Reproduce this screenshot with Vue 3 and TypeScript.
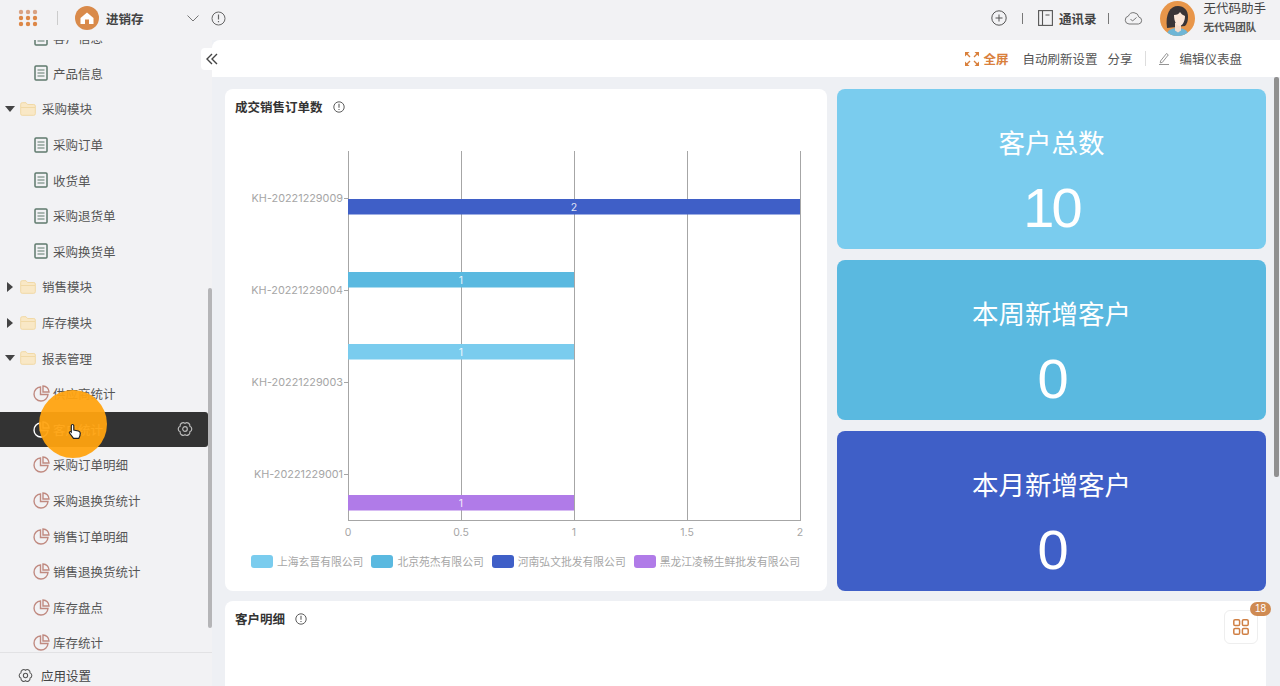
<script setup lang="ts">
interface SideRow {
  label: string
  kind: 'doc' | 'folder' | 'pie'
  open?: boolean
  active?: boolean
}

const sideRows: SideRow[] = [
  { label: '客户信息', kind: 'doc' },
  { label: '产品信息', kind: 'doc' },
  { label: '采购模块', kind: 'folder', open: true },
  { label: '采购订单', kind: 'doc' },
  { label: '收货单', kind: 'doc' },
  { label: '采购退货单', kind: 'doc' },
  { label: '采购换货单', kind: 'doc' },
  { label: '销售模块', kind: 'folder' },
  { label: '库存模块', kind: 'folder' },
  { label: '报表管理', kind: 'folder', open: true },
  { label: '供应商统计', kind: 'pie' },
  { label: '客户统计', kind: 'pie', active: true },
  { label: '采购订单明细', kind: 'pie' },
  { label: '采购退换货统计', kind: 'pie' },
  { label: '销售订单明细', kind: 'pie' },
  { label: '销售退换货统计', kind: 'pie' },
  { label: '库存盘点', kind: 'pie' },
  { label: '库存统计', kind: 'pie' },
]

const tiles = [
  { title: '客户总数', value: 10, color: '#7accee' },
  { title: '本周新增客户', value: 0, color: '#5ab9e0' },
  { title: '本月新增客户', value: 0, color: '#3f5fc7' },
]

const gridX = [348, 461, 574, 687, 800]
const gridLabels = ['0', '0.5', '1', '1.5', '2']

const bars = [
  { y: 199, w: 452, color: '#3f5fc7', value: 2 },
  { y: 272, w: 226, color: '#5ab9e0', value: 1 },
  { y: 344, w: 226, color: '#7accee', value: 1 },
  { y: 495, w: 226, color: '#b07be8', value: 1 },
]

const yLabels = [
  { y: 198, text: 'KH-20221229009' },
  { y: 290, text: 'KH-20221229004' },
  { y: 382, text: 'KH-20221229003' },
  { y: 474, text: 'KH-20221229001' },
]

const legend = [
  { name: '上海玄晋有限公司', color: '#7accee' },
  { name: '北京苑杰有限公司', color: '#5ab9e0' },
  { name: '河南弘文批发有限公司', color: '#3f5fc7' },
  { name: '黑龙江凌畅生鲜批发有限公司', color: '#b07be8' },
]

const gearPath = 'M8 2.400A3 3 0 0 1 12.850 5.200A3 3 0 0 1 12.850 10.800A3 3 0 0 1 8 13.600A3 3 0 0 1 3.150 10.800A3 3 0 0 1 3.150 5.200A3 3 0 0 1 8 2.400Z'
</script>

<template>
  <div class="app">
    <header class="topbar">
      <div class="top-left">
        <svg class="apps" width="20" height="18" viewBox="0 0 20 18">
          <g v-for="row in 3" :key="row">
            <circle v-for="col in 3" :key="col" :cx="3 + (col - 1) * 7" :cy="3 + (row - 1) * 6" r="2.200" :fill="row === 1 ? '#d9a283' : '#dd8746'" />
          </g>
        </svg>
        <span class="top-sep"></span>
        <span class="app-logo">
          <svg width="16" height="16" viewBox="0 0 16 16">
            <path d="M1.500 8 8 2.500 14.500 8V14H1.500Z" fill="#fff" />
            <rect x="6" y="9.500" width="4" height="4.500" fill="#d98a4a" />
          </svg>
        </span>
        <span class="app-name">进销存</span>
        <svg class="chev" width="12" height="7" viewBox="0 0 12 7">
          <path d="M.5.500l5.500 5.500 5.500-5.500" fill="none" stroke="#777" stroke-width="1" />
        </svg>
        <svg width="15" height="15" viewBox="0 0 15 15">
          <circle cx="7.500" cy="7.500" r="6.500" fill="none" stroke="#666" stroke-width="1" />
          <path d="M7.500 3.500v5M7.500 10v1.200" stroke="#666" stroke-width="1.200" />
        </svg>
      </div>
      <div class="top-right">
        <svg width="16" height="16" viewBox="0 0 16 16">
          <circle cx="8" cy="8" r="7.200" fill="none" stroke="#555" stroke-width="1" />
          <path d="M8 4.500v7M4.500 8h7" stroke="#555" stroke-width="1" />
        </svg>
        <span class="bar"></span>
        <svg width="15" height="16" viewBox="0 0 15 16">
          <rect x="0.600" y="0.600" width="13.800" height="14.800" fill="none" stroke="#555" stroke-width="1.100" />
          <path d="M4.500 1v14M7.500 5h4" stroke="#555" stroke-width="1.100" fill="none" />
        </svg>
        <span class="contacts">通讯录</span>
        <span class="bar bar-short"></span>
        <svg width="19" height="14" viewBox="0 0 19 14">
          <path d="M5 13a4 4 0 0 1-.6-7.900 5.500 5.500 0 0 1 10.500 1A3.500 3.500 0 0 1 14.500 13Z" fill="none" stroke="#777" stroke-width="1" />
          <path d="M6.500 8l2 2 4-3.500" fill="none" stroke="#777" stroke-width="1" />
        </svg>
        <svg class="avatar" width="35" height="35" viewBox="0 0 35 35">
          <clipPath id="avatar-clip"><circle cx="17.500" cy="17.500" r="17.500" /></clipPath>
          <g clip-path="url(#avatar-clip)">
            <rect width="35" height="35" fill="#e8964a" />
            <path d="M7 27C5 13 10 5 18 5c6 0 10 4 10 11 0 4-1 7-3 9Z" fill="#3a3436" />
            <path d="M6 35c1-6 6-8 11.500-8S28 29 29 35Z" fill="#6fb6d6" />
            <path d="M15 22h6v7.500l-3 2-3-2Z" fill="#f6dccb" />
            <path d="M14 14c3 0 5-1 6-3 1 2 3 3 5 4 0 6-3 10-5.500 10S14 21 14 14Z" fill="#fbe6d8" />
          </g>
        </svg>
        <div class="user">
          <span class="user-name">无代码助手</span>
          <span class="user-team">无代码团队</span>
        </div>
      </div>
    </header>

    <div class="body">
      <aside class="sidebar">
        <div class="side-scroll">
          <ul class="side-list">
            <li v-for="row in sideRows" :key="row.label" class="side-row" :class="{ active: row.active, group: row.kind === 'folder' }">
              <template v-if="row.kind === 'folder'">
                <svg class="caret" width="10" height="10" viewBox="0 0 10 10">
                  <path v-if="row.open" d="M0 2h10L5 8Z" fill="#444" />
                  <path v-else d="M2 0l6 5-6 5Z" fill="#444" />
                </svg>
                <svg width="16" height="14" viewBox="0 0 16 14">
                  <path d="M.7 2.200A1.500 1.500 0 0 1 2.200.7H6l1.500 1.800h6.300a1.500 1.500 0 0 1 1.500 1.500v7.800a1.500 1.500 0 0 1-1.500 1.500H2.200a1.500 1.500 0 0 1-1.500-1.500Z" fill="#f9e8c6" stroke="#f1d9a6" stroke-width="1" />
                  <path d="M1 5.500h14" stroke="#f1d9a6" stroke-width="1" />
                </svg>
              </template>
              <svg v-else-if="row.kind === 'doc'" class="leaf-icon" width="14" height="16" viewBox="0 0 14 16">
                <rect x="1" y="1" width="12" height="14" rx="1" fill="none" stroke="#5f7a6c" stroke-width="1.500" />
                <path d="M3.500 5h7M3.500 8h7M3.500 11h7" stroke="#5f7a6c" stroke-width="1.200" />
              </svg>
              <svg v-else class="leaf-icon pie" width="17" height="17" viewBox="0 0 17 17">
                <path d="M7.500 2a7 7 0 1 0 7.500 7.500H7.500Z" fill="none" :stroke="row.active ? '#fff' : '#c08a80'" stroke-width="1.400" />
                <path d="M10 1a6 6 0 0 1 6 6h-6Z" fill="none" :stroke="row.active ? '#fff' : '#c08a80'" stroke-width="1.400" />
              </svg>
              <span class="side-label">{{ row.label }}</span>
              <svg v-if="row.active" class="gear" width="16" height="16" viewBox="0 0 16 16">
                <path :d="gearPath" fill="none" stroke="#bbb" stroke-width="1.200" />
                <circle cx="8" cy="8" r="2.300" fill="none" stroke="#bbb" stroke-width="1.200" />
              </svg>
            </li>
          </ul>
          <div class="side-thumb"></div>
        </div>
        <div class="side-foot">
          <svg width="15" height="15" viewBox="0 0 16 16">
            <path :d="gearPath" fill="none" stroke="#555" stroke-width="1.100" />
            <circle cx="8" cy="8" r="2.300" fill="none" stroke="#555" stroke-width="1.100" />
          </svg>
          <span>应用设置</span>
        </div>
        <div class="click-dot">
          <svg width="14" height="17" viewBox="0 0 14 17">
            <path d="M4.500 1.500c.8 0 1.300.5 1.300 1.300V7l4.500 1c1.300.4 2 1 2 2.300 0 2-.6 3.500-1.500 5H5.500L1.500 10c-.5-.7.500-1.800 1.500-1.200l.3.300V2.800c0-.8.400-1.300 1.200-1.300Z" fill="#fff" stroke="#222" stroke-width="1.200" />
          </svg>
        </div>
      </aside>

      <main class="main">
        <button class="collapse" type="button">
          <svg width="12" height="12" viewBox="0 0 12 12">
            <path d="M6 1 1 6l5 5M11 1 6 6l5 5" fill="none" stroke="#444" stroke-width="1.400" />
          </svg>
        </button>
        <div class="toolbar">
          <svg width="16" height="16" viewBox="0 0 16 16">
            <path d="M1 1h4.500L1 5.500ZM15 1h-4.500L15 5.500ZM1 15h4.500L1 10.500ZM15 15h-4.500l4.500-4.500Z" fill="#d9803c" />
            <path d="M2 2l4 4M14 2l-4 4M2 14l4-4M14 14l-4-4" stroke="#d9803c" stroke-width="1.400" />
          </svg>
          <span class="tb-full">全屏</span>
          <span class="tb-item tb-refresh">自动刷新设置</span>
          <span class="tb-item">分享</span>
          <span class="tb-sep"></span>
          <svg width="12" height="13" viewBox="0 0 12 13">
            <path d="M2.500 9 8.500 1.500l1.800 1.400-6 7.500-2 .5ZM1 12.500h10" fill="none" stroke="#888" stroke-width="0.900" />
          </svg>
          <span class="tb-item tb-edit">编辑仪表盘</span>
        </div>

        <div class="content">
          <div class="top-grid">
            <section class="card chart-card">
              <div class="card-head">
                <span class="card-title">成交销售订单数</span>
                <svg width="12" height="12" viewBox="0 0 15 15">
                  <circle cx="7.500" cy="7.500" r="6.500" fill="none" stroke="#555" stroke-width="1.200" />
                  <path d="M7.500 3.500v5M7.500 10v1.200" stroke="#555" stroke-width="1.300" />
                </svg>
              </div>
              <svg class="chart" width="602" height="477" viewBox="225 114 602 477">
                <line v-for="x in gridX" :key="x" :x1="x + 0.5" :x2="x + 0.5" y1="151" y2="520" stroke="#a6a6a6" stroke-width="1" />
                <line x1="348" x2="801" y1="520.500" y2="520.500" stroke="#a6a6a6" stroke-width="1" />
                <line v-for="l in yLabels" :key="l.y" x1="344" x2="348" :y1="l.y + 0.5" :y2="l.y + 0.5" stroke="#a6a6a6" stroke-width="1" />
                <template v-for="b in bars" :key="b.y">
                  <rect x="348" :y="b.y" :width="b.w" height="15.500" :fill="b.color" />
                  <text class="bar-value" :x="348 + b.w / 2" :y="b.y + 12">{{ b.value }}</text>
                </template>
                <text v-for="l in yLabels" :key="l.text" class="axis-y" x="343" :y="l.y + 4">{{ l.text }}</text>
                <text v-for="(label, i) in gridLabels" :key="label" class="axis-x" :x="gridX[i]" y="536">{{ label }}</text>
              </svg>
              <div class="legend">
                <span v-for="item in legend" :key="item.name" class="legend-item">
                  <i class="swatch" :style="{ background: item.color }"></i>{{ item.name }}
                </span>
              </div>
            </section>

            <div class="tiles">
              <div v-for="tile in tiles" :key="tile.title" class="tile" :style="{ background: tile.color }">
                <div class="tile-title">{{ tile.title }}</div>
                <div class="tile-value">{{ tile.value }}</div>
              </div>
            </div>
          </div>

          <section class="card detail-card">
            <div class="card-head">
              <span class="card-title">客户明细</span>
              <svg width="12" height="12" viewBox="0 0 15 15">
                <circle cx="7.500" cy="7.500" r="6.500" fill="none" stroke="#555" stroke-width="1.200" />
                <path d="M7.500 3.500v5M7.500 10v1.200" stroke="#555" stroke-width="1.300" />
              </svg>
            </div>
            <div class="float-btn">
              <svg width="16" height="16" viewBox="0 0 16 16">
                <rect x="0.800" y="0.800" width="5.800" height="5.800" rx="1.300" fill="none" stroke="#cf7f43" stroke-width="1.500" />
                <rect x="9.400" y="0.800" width="5.800" height="5.800" rx="1.300" fill="none" stroke="#cf7f43" stroke-width="1.500" />
                <rect x="0.800" y="9.400" width="5.800" height="5.800" rx="1.300" fill="none" stroke="#cf7f43" stroke-width="1.500" />
                <rect x="9.400" y="9.400" width="5.800" height="5.800" rx="1.300" fill="none" stroke="#cf7f43" stroke-width="1.500" />
              </svg>
              <span class="badge">18</span>
            </div>
          </section>
        </div>
        <div class="page-thumb"></div>
      </main>
    </div>
  </div>
</template>

<style>
html,
body {
  margin: 0;
  height: 100%;
  overflow: hidden;
}
</style>

<style scoped>
.app {
  width: 1280px;
  height: 686px;
  display: flex;
  flex-direction: column;
  overflow: hidden;
  background: #f2f2f4;
  font-family: "Liberation Sans", "Noto Sans CJK SC", sans-serif;
  color: #333;
}

.topbar {
  height: 40px;
  flex: none;
  display: flex;
  justify-content: space-between;
  align-items: center;
  padding: 0 14px 4px 18px;
  box-sizing: border-box;
}

.top-left,
.top-right {
  display: flex;
  align-items: center;
}

.top-sep {
  width: 1px;
  height: 14px;
  background: #ccc;
  margin: 0 17px 0 19px;
}

.app-logo {
  width: 24px;
  height: 24px;
  border-radius: 50%;
  background: #d98a4a;
  display: flex;
  align-items: center;
  justify-content: center;
}

.app-name {
  font-size: 12.5px;
  font-weight: 700;
  margin-left: 7px;
  color: #444;
}

.chev {
  margin: 0 12px 0 43px;
}

.contacts {
  font-size: 12.5px;
  font-weight: 700;
  margin-left: 6px;
  color: #444;
}

.bar {
  width: 1px;
  height: 11px;
  background: #777;
  margin: 0 15px;
}

.bar-short {
  margin-left: 12px;
}

.avatar {
  margin-left: 17px;
}

.user {
  margin-left: 8px;
  display: flex;
  flex-direction: column;
  gap: 2px;
  line-height: 16px;
  color: #444;
}

.user-name {
  font-size: 12.5px;
}

.user-team {
  font-size: 10.6px;
  font-weight: 700;
  color: #555;
}

.body {
  flex: 1;
  display: flex;
  min-height: 0;
  position: relative;
}

.sidebar {
  width: 212px;
  flex: none;
  display: flex;
  flex-direction: column;
  position: relative;
}

.side-scroll {
  flex: 1;
  overflow: hidden;
  position: relative;
  border-bottom: 1px solid #e2e2e4;
}

.side-list {
  list-style: none;
  margin: -20px 0 0;
  padding: 0;
  width: 208px;
}

.side-row {
  height: 35.6px;
  display: flex;
  align-items: center;
  padding-left: 34px;
  box-sizing: border-box;
  font-size: 12.5px;
  color: #555;
  border-radius: 0 3px 3px 0;
}

.side-row.group {
  padding-left: 5px;
  gap: 5px;
}

.side-label {
  margin-left: 5px;
}

.group .side-label {
  margin-left: 1px;
}

.leaf-icon.pie {
  margin-left: -1px;
  margin-right: -2px;
}

.side-row.active {
  background: #333;
  color: #fff;
}

.gear {
  margin-left: auto;
  margin-right: 15px;
}

.side-thumb {
  position: absolute;
  top: 248px;
  left: 208px;
  width: 4px;
  height: 340px;
  border-radius: 2px;
  background: #b5b5b7;
}

.side-foot {
  height: 33px;
  flex: none;
  box-sizing: border-box;
  padding: 11px 0 0 18px;
  display: flex;
  align-items: center;
  gap: 8px;
  font-size: 12.5px;
  color: #444;
}

/* click highlight from the screen recording */
.click-dot {
  position: absolute;
  left: 39px;
  top: 350px;
  width: 68px;
  height: 68px;
  padding: 14px 0 0 3px;
  box-sizing: border-box;
  border-radius: 50%;
  background: rgba(255, 163, 16, 0.95);
  display: flex;
  align-items: center;
  justify-content: center;
}

.main {
  flex: 1;
  min-width: 0;
  display: flex;
  flex-direction: column;
  position: relative;
  background: #eef0f4;
}

.collapse {
  position: absolute;
  left: -11px;
  top: 8px;
  width: 22px;
  height: 22px;
  border: 0;
  padding: 0;
  border-radius: 4px;
  background: #fff;
  display: flex;
  align-items: center;
  justify-content: center;
}

.toolbar {
  height: 37px;
  flex: none;
  background: #fff;
  border-radius: 8px 0 0 0;
  display: flex;
  align-items: center;
  padding-right: 38px;
  justify-content: flex-end;
  font-size: 12.5px;
  color: #555;
}

.tb-full {
  color: #d9803c;
  font-weight: 700;
  margin: 0 14px 0 3px;
}

.tb-refresh {
  margin-right: 10px;
}

.tb-sep {
  width: 1px;
  height: 15px;
  background: #ddd;
  margin: 0 12px 0 13px;
}

.tb-edit {
  margin-left: 9px;
}

.content {
  flex: 1;
  min-height: 0;
  padding: 12px 14px 0 13px;
  display: flex;
  flex-direction: column;
  gap: 10px;
}

.top-grid {
  display: flex;
  gap: 10px;
  height: 502px;
  flex: none;
}

.card {
  background: #fff;
  border-radius: 8px;
  position: relative;
}

.chart-card {
  width: 602px;
  flex: none;
  overflow: hidden;
}

.card-head {
  height: 35px;
  display: flex;
  align-items: center;
  gap: 10px;
  padding-left: 10px;
}

.card-title {
  font-size: 12.5px;
  font-weight: 700;
  color: #333;
}

.chart {
  display: block;
  position: absolute;
  left: 0;
  top: 25px;
}

.bar-value {
  font-family: Inter, sans-serif;
  font-size: 10.5px;
  fill: rgba(255, 255, 255, 0.85);
  text-anchor: middle;
}

.axis-y {
  font-family: Inter, sans-serif;
  font-size: 10.85px;
  fill: #a6a6a6;
  text-anchor: end;
}

.axis-x {
  font-family: Inter, sans-serif;
  font-size: 10.5px;
  fill: #a6a6a6;
  text-anchor: middle;
}

.legend {
  position: absolute;
  left: 26px;
  top: 464px;
  display: flex;
  gap: 8px;
  font-size: 10.8px;
  color: #a6a6a6;
  white-space: nowrap;
}

.legend-item {
  display: flex;
  align-items: center;
}

.swatch {
  width: 22px;
  height: 13px;
  border-radius: 3px;
  margin-right: 4px;
}

.tiles {
  flex: 1;
  display: flex;
  flex-direction: column;
  gap: 11px;
}

.tile {
  flex: 1;
  border-radius: 8px;
  color: #fff;
  display: flex;
  flex-direction: column;
  align-items: center;
  padding-top: 37px;
  box-sizing: border-box;
}

.tile-title {
  font-size: 26.5px;
  line-height: 36px;
}

.tile-value {
  font-size: 56px;
  line-height: 60px;
  letter-spacing: -3px;
  margin-top: 16px;
}

.detail-card {
  flex: 1;
  border-radius: 8px 8px 0 0;
}

.float-btn {
  position: absolute;
  right: 8px;
  top: 9px;
  width: 34px;
  height: 34px;
  box-sizing: border-box;
  border: 1px solid #eee;
  border-radius: 6px;
  background: #fff;
  display: flex;
  align-items: center;
  justify-content: center;
}

.badge {
  position: absolute;
  right: -14px;
  top: -9px;
  width: 21px;
  height: 14px;
  border-radius: 7px;
  background: #cf8a52;
  color: #fff;
  font-size: 10px;
  line-height: 14px;
  text-align: center;
}

.page-thumb {
  position: absolute;
  right: 1px;
  top: 37px;
  width: 5px;
  height: 400px;
  border-radius: 2px;
  background: #909090;
}
</style>
